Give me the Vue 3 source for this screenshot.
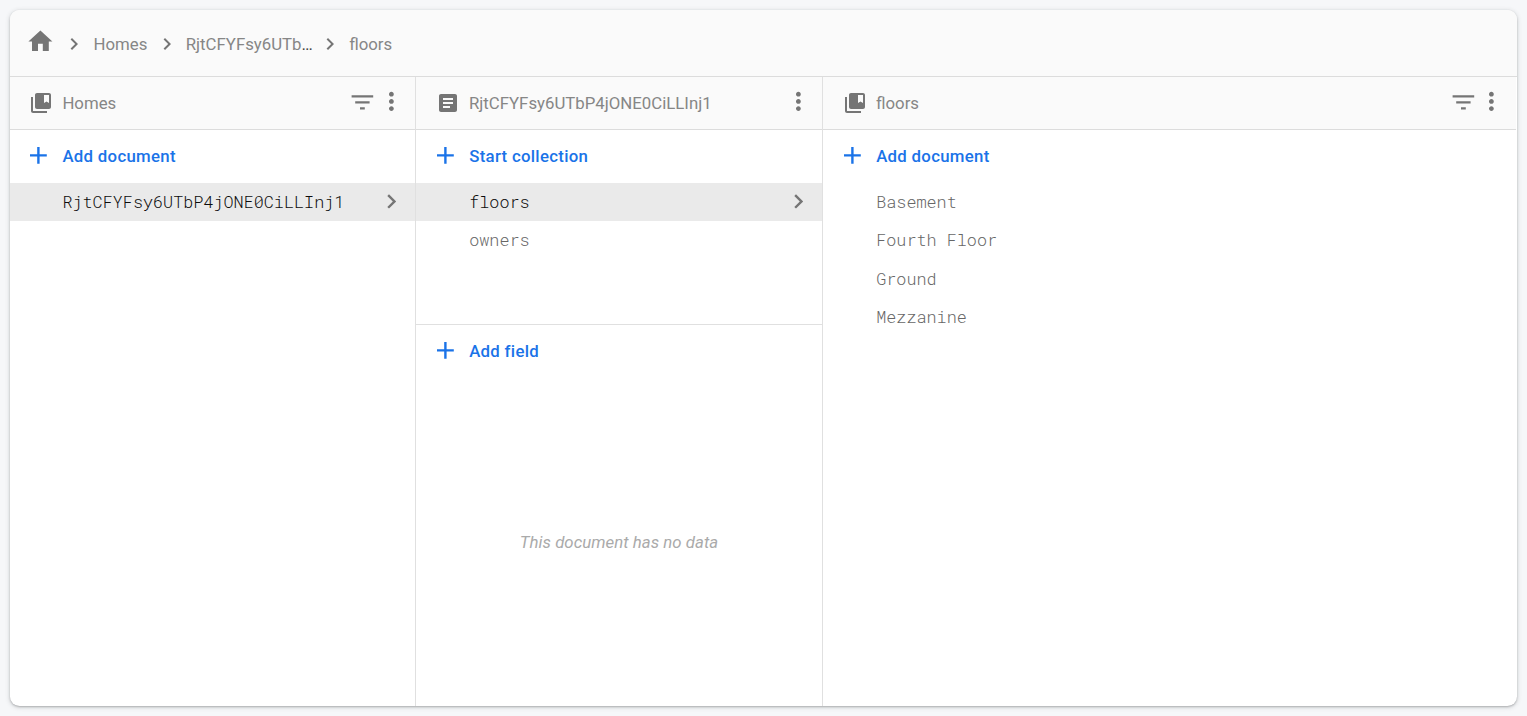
<script setup>
const icons = {
  home: 'M10 20v-6h4v6h5v-8h3L12 3 2 12h3v8z',
  chevron: 'M10 6L8.59 7.41 13.17 12l-4.58 4.59L10 18l6-6z',
  collection: 'M4 6H2v14c0 1.1.9 2 2 2h14v-2H4V6zm16-4H8c-1.1 0-2 .9-2 2v12c0 1.1.9 2 2 2h12c1.1 0 2-.9 2-2V4c0-1.1-.9-2-2-2zm0 10l-2.5-1.5L15 12V4h5v8z',
  document: 'M19 3H5c-1.1 0-2 .9-2 2v14c0 1.1.9 2 2 2h14c1.1 0 2-.9 2-2V5c0-1.1-.9-2-2-2zm-5 14H7v-2h7v2zm3-4H7v-2h10v2zm0-4H7V7h10v2z',
  filter: 'M10 18h4v-2h-4v2zM3 6v2h18V6H3zm3 7h12v-2H6v2z',
  more: 'M12 8c1.1 0 2-.9 2-2s-.9-2-2-2-2 .9-2 2 .9 2 2 2zm0 2c-1.1 0-2 .9-2 2s.9 2 2 2 2-.9 2-2-.9-2-2-2zm0 6c-1.1 0-2 .9-2 2s.9 2 2 2 2-.9 2-2-.9-2-2-2z',
  plus: 'M19 13h-6v6h-2v-6H5v-2h6V5h2v6h6z',
}

const crumbs = [
  { name: 'Homes' },
  { name: 'RjtCFYFsy6UTb', truncated: true },
  { name: 'floors' },
]

const panels = [
  {
    title: 'Homes', icon: 'collection', filter: true, action: 'Add document',
    items: [{ name: 'RjtCFYFsy6UTbP4jONE0CiLLInj1', selected: true }],
  },
  {
    title: 'RjtCFYFsy6UTbP4jONE0CiLLInj1', icon: 'document', filter: false, action: 'Start collection',
    items: [{ name: 'floors', selected: true }, { name: 'owners' }],
    fields: true,
  },
  {
    title: 'floors', icon: 'collection', filter: true, action: 'Add document',
    items: [{ name: 'Basement' }, { name: 'Fourth Floor' }, { name: 'Ground' }, { name: 'Mezzanine' }],
  },
]
</script>

<template>
  <main class="page">
    <section class="card">
      <nav class="crumbs">
        <svg class="icon home" viewBox="0 0 24 24"><path :d="icons.home" /></svg>
        <template v-for="crumb in crumbs" :key="crumb.name">
          <svg class="icon crumb-arrow" viewBox="0 0 24 24"><path :d="icons.chevron" /></svg>
          <a class="crumb" :class="{ truncated: crumb.truncated }">{{ crumb.name }}<span v-if="crumb.truncated" class="dots">…</span></a>
        </template>
      </nav>
      <div class="panels">
        <section v-for="panel in panels" :key="panel.title" class="panel">
          <header class="panel-head">
            <svg class="icon kind" viewBox="0 0 24 24"><path :d="icons[panel.icon]" /></svg>
            <span class="title">{{ panel.title }}</span>
            <svg v-if="panel.filter" class="icon filter" viewBox="0 0 24 24"><path :d="icons.filter" /></svg>
            <svg class="icon more" viewBox="0 0 24 24"><path :d="icons.more" /></svg>
          </header>
          <div class="upper" :class="{ split: panel.fields }">
            <button class="action">
              <svg class="icon plus" viewBox="0 0 24 24"><path :d="icons.plus" /></svg>
              <span>{{ panel.action }}</span>
            </button>
            <ul class="list">
              <li v-for="item in panel.items" :key="item.name" class="item" :class="{ selected: item.selected }">
                <span>{{ item.name }}</span>
                <svg v-if="item.selected" class="icon open" viewBox="0 0 24 24"><path :d="icons.chevron" /></svg>
              </li>
            </ul>
          </div>
          <div v-if="panel.fields" class="fields">
            <button class="action">
              <svg class="icon plus" viewBox="0 0 24 24"><path :d="icons.plus" /></svg>
              <span>Add field</span>
            </button>
            <p class="empty">This document has no data</p>
          </div>
        </section>
      </div>
    </section>
  </main>
</template>

<style>
body {
  background: #f6f7f9;
}
</style>

<style scoped>
.page {
  box-sizing: border-box;
  height: 716px;
  padding: 10px;
  font-family: Roboto, sans-serif;
  font-size: 16.8px;
  color: #868686;
}
.card {
  display: flex;
  flex-direction: column;
  height: 696px;
  width: 1507px;
  overflow: hidden;
  border-radius: 9.6px;
  background: #fff;
  box-shadow: 0 1px 2px rgba(60, 64, 67, 0.3), 0 1px 4px 1px rgba(60, 64, 67, 0.15);
}
.icon {
  flex: none;
  width: 28.8px;
  height: 28.8px;
  fill: #757575;
}
.crumbs {
  box-sizing: border-box;
  display: flex;
  align-items: center;
  height: 67px;
  padding: 2px 0 0 16.4px;
  border-bottom: 1px solid #dcdcdc;
  background: #fafafa;
}
.home {
  margin: 0 7.2px 5.4px 0;
}
.crumb-arrow {
  width: 24px;
  height: 24px;
  margin-right: 7.2px;
}
.crumb {
  margin-right: 7.2px;
}
.crumb.truncated {
  margin-right: 5.2px;
}
.dots {
  color: #424242;
}
.panels {
  flex: 1;
  display: grid;
  grid-template-columns: 406px 407px 1fr;
}
.panel {
  display: flex;
  flex-direction: column;
  min-width: 0;
  border-right: 1px solid #e0e0e0;
}
.panel:last-child {
  border-right-color: transparent;
}
.panel-head {
  box-sizing: border-box;
  display: flex;
  align-items: center;
  height: 53px;
  padding: 0 9.5px 0 19px;
  border-bottom: 1px solid #dcdcdc;
  background: #fafafa;
}
.panel + .panel .panel-head {
  padding-left: 19.6px;
}
.panel:last-child .panel-head {
  padding-right: 9.9px;
}
.kind {
  width: 24px;
  height: 24px;
  margin-right: 9.4px;
}
.title {
  flex: 1;
}
.filter {
  margin-bottom: 1px;
}
.more {
  margin-bottom: 3px;
}
.upper.split {
  box-sizing: border-box;
  height: 195px;
  border-bottom: 1px solid #e0e0e0;
}
.action {
  display: flex;
  align-items: center;
  height: 53px;
  width: 100%;
  padding: 0 0 1.4px 14px;
  border: 0;
  background: none;
  font: 500 16.8px Roboto, sans-serif;
  letter-spacing: 0.3px;
  color: #1a73e8;
}
.panel + .panel .action {
  padding-left: 14.8px;
}
.plus {
  margin-right: 9.6px;
  fill: #1a73e8;
}
.list {
  margin: 0;
  padding: 0;
  list-style: none;
}
.item {
  box-sizing: border-box;
  display: flex;
  align-items: center;
  justify-content: space-between;
  height: 38.4px;
  padding: 0 9.5px 1.2px 52.4px;
  font-family: "Roboto Mono", "Liberation Mono", monospace;
  font-weight: 300;
  color: #666;
}
.panel + .panel .item {
  padding-left: 53.2px;
}
.item.selected {
  background: #eaeaea;
  color: #0c0c0c;
}
.fields {
  flex: 1;
  display: flex;
  flex-direction: column;
}
.empty {
  flex: 1;
  display: flex;
  align-items: center;
  justify-content: center;
  margin: 0;
  font-style: italic;
  letter-spacing: 0.04px;
  color: #aaa;
}
</style>
